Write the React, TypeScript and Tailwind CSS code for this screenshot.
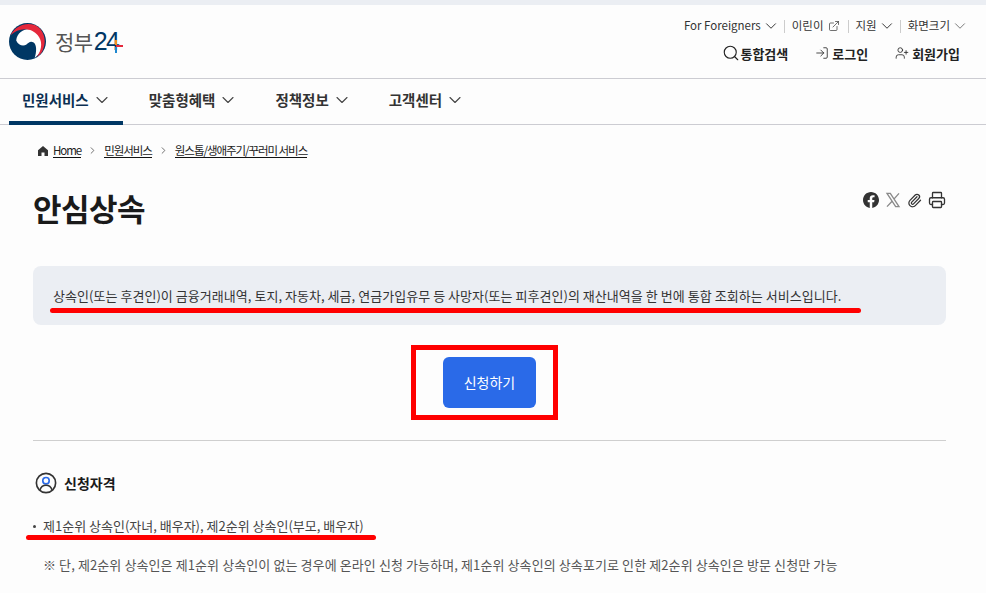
import React from 'react';
import { ChevronDown, ChevronRight, ExternalLink, Search, LogIn, UserPlus, Paperclip, Printer } from 'lucide-react';

const font = "font-['Noto_Sans_CJK_KR','Noto_Sans',sans-serif]";

function Logo() {
  return (
    <div className="flex items-center gap-[9px]">
      <svg width="37" height="37" viewBox="0 0 36 36">
        <circle cx="18" cy="18" r="18" fill="#003764" />
        <path d="M7 17C8 9 15 5 22 6C30 7 34 15 33 22C32 27 29 31 25 34C27 28 27 21 24 19C21 17 19 19 17 21C14 23 9 22 7 17Z" fill="#fff" />
        <path d="M1.500 12C6 3 16 -1 25 2C34 6 37 17 33 26C32 29 30 31 27 33C32 26 33 18 28 12C22 4 9 4 1.500 12Z" fill="#e5283c" />
      </svg>
      <div className="relative flex items-center leading-none">
        <span className="text-[21px] tracking-[-0.5px] text-[#555]">정부</span>
        <span className="ml-[1px] text-[25px] tracking-[-1.500px] text-[#003764] font-['Liberation_Sans',sans-serif]">24</span>
        <span className="absolute right-[-5px] top-[16px] h-[2px] w-[7px] bg-[#e5283c]" />
        <span className="absolute right-[1px] top-[11px] h-[5px] w-[2px] bg-[#f09020]" />
        <span className="absolute right-[1px] top-[18px] h-[6px] w-[2px] bg-[#1e88d0]" />
      </div>
    </div>
  );
}

function TopLink({ label, icon }: { label: string; icon: React.ReactNode }) {
  return (
    <span className="flex items-center text-[11.500px] leading-none text-[#333]">
      {label}
      {icon}
    </span>
  );
}

function Divider() {
  return <span className="ml-[4px] mr-[7px] h-[13px] w-px bg-[#ccc]" />;
}

function NavItem({ label, active }: { label: string; active?: boolean }) {
  return (
    <div className={`-mb-px flex h-[46px] items-center gap-[3px] border-b-[4px] pl-[13px] pr-[11px] ${active ? 'border-[#003764] text-[#0b2f52]' : 'border-transparent text-[#333]'}`}>
      <span className="text-[14.500px] font-bold">{label}</span>
      <ChevronDown size={20} strokeWidth={1.300} className="text-[#444]" />
    </div>
  );
}

function Crumb({ label }: { label: string }) {
  return <span className="border-b border-[#111] text-[11.500px] leading-[14px] tracking-[-1.050px] text-[#222]">{label}</span>;
}

export default function App() {
  return (
    <div className={`${font} relative h-[593px] w-[986px] overflow-hidden bg-[#fdfdfd]`}>
      <div className="h-[5px] bg-[#ebeef3]" />

      <header className="flex h-[74px] items-start justify-between border-b border-[#ccccd2] pl-[9px] pr-[17px]">
        <div className="pt-[18px]">
          <Logo />
        </div>
        <div className="flex flex-col items-end">
          <div className="flex items-center pt-[12px]">
            <TopLink label="For Foreigners" icon={<ChevronDown size={18} strokeWidth={1.300} className="ml-[1px]" />} />
            <Divider />
            <TopLink label="이린이" icon={<ExternalLink size={12} strokeWidth={1.400} className="ml-[4px] mr-[4px]" />} />
            <Divider />
            <TopLink label="지원" icon={<ChevronDown size={18} strokeWidth={1.300} className="ml-[1px]" />} />
            <Divider />
            <TopLink label="화면크기" icon={<ChevronDown size={18} strokeWidth={1.300} className="ml-[1px] text-[#777]" />} />
          </div>
          <div className="mt-[9px] flex items-center gap-[27px] pr-[9px] text-[13px] font-bold leading-none text-[#222]">
            <span className="flex items-center"><Search size={18} strokeWidth={1.500} />통합검색</span>
            <span className="flex items-center gap-[3px]"><LogIn size={14} strokeWidth={1.400} />로그인</span>
            <span className="flex items-center gap-[3px]"><UserPlus size={14} strokeWidth={1.400} />회원가입</span>
          </div>
        </div>
      </header>

      <nav className="flex h-[46px] items-center gap-[13px] border-b border-[#ccccd2] pl-[9px]">
        <NavItem label="민원서비스" active />
        <NavItem label="맞춤형혜택" />
        <NavItem label="정책정보" />
        <NavItem label="고객센터" />
      </nav>

      <main className="pl-[33px] pr-[40px]">
        <div className="flex items-center pl-[4px] pt-[18px] text-[#666]">
          <svg width="12" height="12" viewBox="0 0 24 24" fill="#333" className="mr-[4px]">
            <path d="M12 2 2 10.500V22h7v-7h6v7h7V10.500L12 2Z" />
          </svg>
          <Crumb label="Home" />
          <ChevronRight size={11} className="mx-[6px]" />
          <Crumb label="민원서비스" />
          <ChevronRight size={11} className="mx-[6px]" />
          <Crumb label="원스톱/생애주기/꾸러미 서비스" />
        </div>

        <div className="flex items-start justify-between pt-[27px]">
          <h1 className="text-[31px] font-bold leading-[46px] tracking-[-0.5px] text-[#1a1a1a]">안심상속</h1>
          <div className="flex items-center gap-[6px] pt-[6px] text-[#333]">
            <svg width="16" height="16" viewBox="0 0 24 24" fill="#333">
              <path d="M24 12.070C24 5.400 18.630 0 12 0S0 5.400 0 12.070c0 6.030 4.390 11.020 10.130 11.930v-8.440H7.080v-3.490h3.050V9.410c0-3.030 1.790-4.700 4.530-4.700 1.310 0 2.690.24 2.690.24v2.970h-1.510c-1.490 0-1.960.93-1.960 1.890v2.260h3.330l-.53 3.490h-2.800V24C19.610 23.090 24 18.100 24 12.070Z" />
            </svg>
            <svg width="16" height="16" viewBox="0 0 24 24" fill="none" stroke="#8a8a8a" strokeWidth="2">
              <path d="M3 2h5l13 20h-5L3 2ZM21 2l-8 9M11 13.500 3 22" />
            </svg>
            <Paperclip size={15} strokeWidth={2} />
            <Printer size={18} strokeWidth={1.750} />
          </div>
        </div>

        <div className="mt-[35px] flex h-[59px] items-center rounded-[8px] bg-[#ebeef3] px-[20px] text-[13px] tracking-[0.04px] text-[#333]">
          상속인(또는 후견인)이 금융거래내역, 토지, 자동차, 세금, 연금가입유무 등 사망자(또는 피후견인)의 재산내역을 한 번에 통합 조회하는 서비스입니다.
        </div>

        <div className="flex justify-center pt-[32px]">
          <button className="h-[51px] w-[93px] rounded-[6px] bg-[#2a6ae8] text-[14px] text-white">신청하기</button>
        </div>

        <div className="mt-[32px] border-t border-[#cfcfcf]" />

        <div className="flex items-center gap-[7px] pl-[2px] pt-[31px]">
          <svg width="22" height="22" viewBox="0 0 24 24" fill="none" stroke="#333" strokeWidth="1.800">
            <circle cx="12" cy="12" r="10.500" />
            <circle cx="12" cy="9.500" r="3.500" stroke="#2a6ae8" />
            <path d="M5.500 19.500c1-3.500 3.500-5 6.500-5s5.500 1.500 6.500 5" />
          </svg>
          <h2 className="text-[14px] font-bold leading-[22px] text-[#1a1a1a]">신청자격</h2>
        </div>

        <ul className="pt-[23px] text-[13px] leading-[18px] text-[#444]">
          <li className="flex items-center">
            <span className="mr-[7px] h-[3px] w-[3px] rounded-full bg-[#444]" />
            제1순위 상속인(자녀, 배우자), 제2순위 상속인(부모, 배우자)
          </li>
          <li className="whitespace-nowrap pl-[10px] pt-[21px] tracking-[0.1px] text-[#555]">
            ※ 단, 제2순위 상속인은 제1순위 상속인이 없는 경우에 온라인 신청 가능하며, 제1순위 상속인의 상속포기로 인한 제2순위 상속인은 방문 신청만 가능
          </li>
        </ul>
      </main>

      {/* red markup drawn over the page */}
      <div className="absolute left-[50px] top-[308px] h-[5px] w-[811px] rounded-full bg-[#f00]" />
      <div className="absolute left-[411px] top-[345px] h-[75px] w-[147px] border-[5px] border-[#f00]" />
      <div className="absolute left-[26px] top-[535px] h-[5px] w-[350px] rounded-full bg-[#f00]" />
    </div>
  );
}
